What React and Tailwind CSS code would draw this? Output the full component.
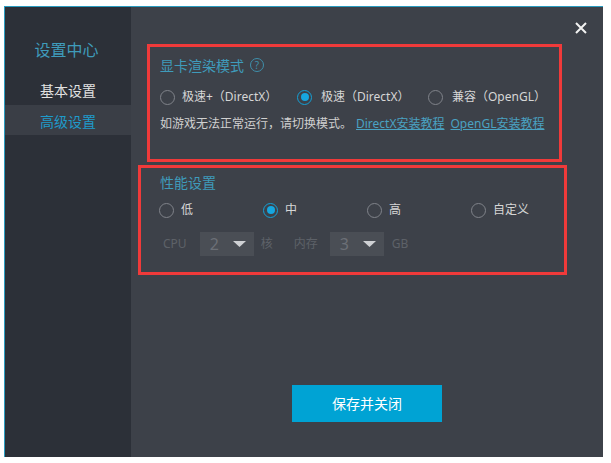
import React, { useState } from "react";

const font = { fontFamily: '"Noto Sans", "Noto Sans CJK SC", sans-serif' };

const Radio = ({ checked }) => (
  <span
    className={
      "flex items-center justify-center w-[15px] h-[15px] rounded-full shrink-0 " +
      (checked ? "border-[1.5px] border-[#14a0d6]" : "border border-[#80838a]")
    }
  >
    {checked && <span className="w-[8px] h-[8px] rounded-full bg-[#16a6df]" />}
  </span>
);

const Select = ({ value }) => (
  <div className="flex items-center w-[54px] h-[24px] bg-[#4a4e55] pl-[10px] pr-[8px]">
    <span className="text-[16px] leading-none text-[#6c7077]">{value}</span>
    <svg className="ml-auto" width="13" height="6" viewBox="0 0 13 6">
      <polygon points="0,0 13,0 6.5,6" fill="#cfd1d4" />
    </svg>
  </div>
);

const App = () => {
  const [mode, setMode] = useState(1);
  const [perf, setPerf] = useState(1);

  const modes = [
    { label: "极速+（DirectX）", w: "w-[137px]" },
    { label: "极速（DirectX）", w: "w-[131px]" },
    { label: "兼容（OpenGL）", w: "" },
  ];
  const perfs = ["低", "中", "高", "自定义"];

  return (
    <div className="w-[611px] h-[463px] bg-white pt-[6px] pl-[4px]" style={font}>
      <div className="w-[599px] h-[451px] flex border-t border-l border-[#2a9cc0]">
        {/* sidebar */}
        <div className="w-[126px] bg-[#2c3038] flex flex-col pt-[31px]">
          <div className="text-center text-[16px] leading-[24px] text-[#3f9bbb] pr-[3px]">设置中心</div>
          <div className="mt-[13px] h-[30px] flex items-center justify-center text-[14px] text-[#e2e2e2]">
            基本设置
          </div>
          <div className="h-[30px] flex items-center justify-center text-[14px] text-[#1e9bcb] bg-[#3a3e46] pt-[2px]">
            高级设置
          </div>
        </div>

        {/* main */}
        <div className="flex-1 bg-[#3d4149] relative flex flex-col">
          <button className="absolute top-[15px] right-[16px]">
            <svg width="12" height="12" viewBox="0 0 12 12">
              <path d="M1 1L11 11M11 1L1 11" stroke="#f2f2f2" strokeWidth="2" />
            </svg>
          </button>

          {/* 显卡渲染模式 */}
          <div className="mt-[37px] ml-[16px] w-[415px] h-[118px] border-[3px] border-[#f03a3a] pt-[8px] pl-[10px]">
            <div className="flex items-center h-[20px]">
              <span className="text-[14px] text-[#3f9bbb]">显卡渲染模式</span>
              <span className="ml-[6px] w-[14px] h-[14px] rounded-full border border-[#3f8fab] flex items-center justify-center text-[10px] leading-none text-[#3f8fab]">
                ?
              </span>
            </div>
            <div className="flex items-center h-[20px] mt-[12px]">
              {modes.map((m, i) => (
                <div
                  key={m.label}
                  className={"flex items-center shrink-0 cursor-pointer " + m.w}
                  onClick={() => setMode(i)}
                >
                  <Radio checked={mode === i} />
                  <span className={"text-[12px] text-[#d6d6d6] " + (i === 0 ? "ml-[7px]" : "ml-[9px]")}>
                    {m.label}
                  </span>
                </div>
              ))}
            </div>
            <div className="flex items-center h-[20px] mt-[7px] text-[12px] whitespace-nowrap">
              <span className="text-[#d0d0d0]">如游戏无法正常运行，请切换模式。</span>
              <a className="ml-[4px] text-[#4aa2c2] underline cursor-pointer">DirectX安装教程</a>
              <a className="ml-[6px] text-[#4aa2c2] underline cursor-pointer">OpenGL安装教程</a>
            </div>
          </div>

          {/* 性能设置 */}
          <div className="mt-[3px] ml-[7px] w-[429px] h-[110px] border-[3px] border-[#f03a3a] pt-[4px] pl-[18px]">
            <div className="h-[20px] flex items-center ml-[1px] text-[14px] text-[#3f9bbb]">性能设置</div>
            <div className="flex items-center h-[20px] mt-[8px]">
              {perfs.map((p, i) => (
                <div
                  key={p}
                  className={"flex items-center shrink-0 cursor-pointer " + (i < 3 ? "w-[104px]" : "")}
                  onClick={() => setPerf(i)}
                >
                  <Radio checked={perf === i} />
                  <span className="ml-[7px] text-[12px] text-[#d6d6d6]">{p}</span>
                </div>
              ))}
            </div>
            <div className="flex items-center mt-[12px] ml-[4px] text-[12px] text-[#5d6168]">
              <span>CPU</span>
              <div className="ml-[13px]">
                <Select value="2" />
              </div>
              <span className="ml-[7px]">核</span>
              <span className="ml-[21px]">内存</span>
              <div className="ml-[12px]">
                <Select value="3" />
              </div>
              <span className="ml-[8px]">GB</span>
            </div>
          </div>

          <button className="self-center mt-[110px] w-[150px] h-[37px] bg-[#00a3d4] text-white text-[14px]">
            保存并关闭
          </button>
        </div>
      </div>
    </div>
  );
};

export default App;
